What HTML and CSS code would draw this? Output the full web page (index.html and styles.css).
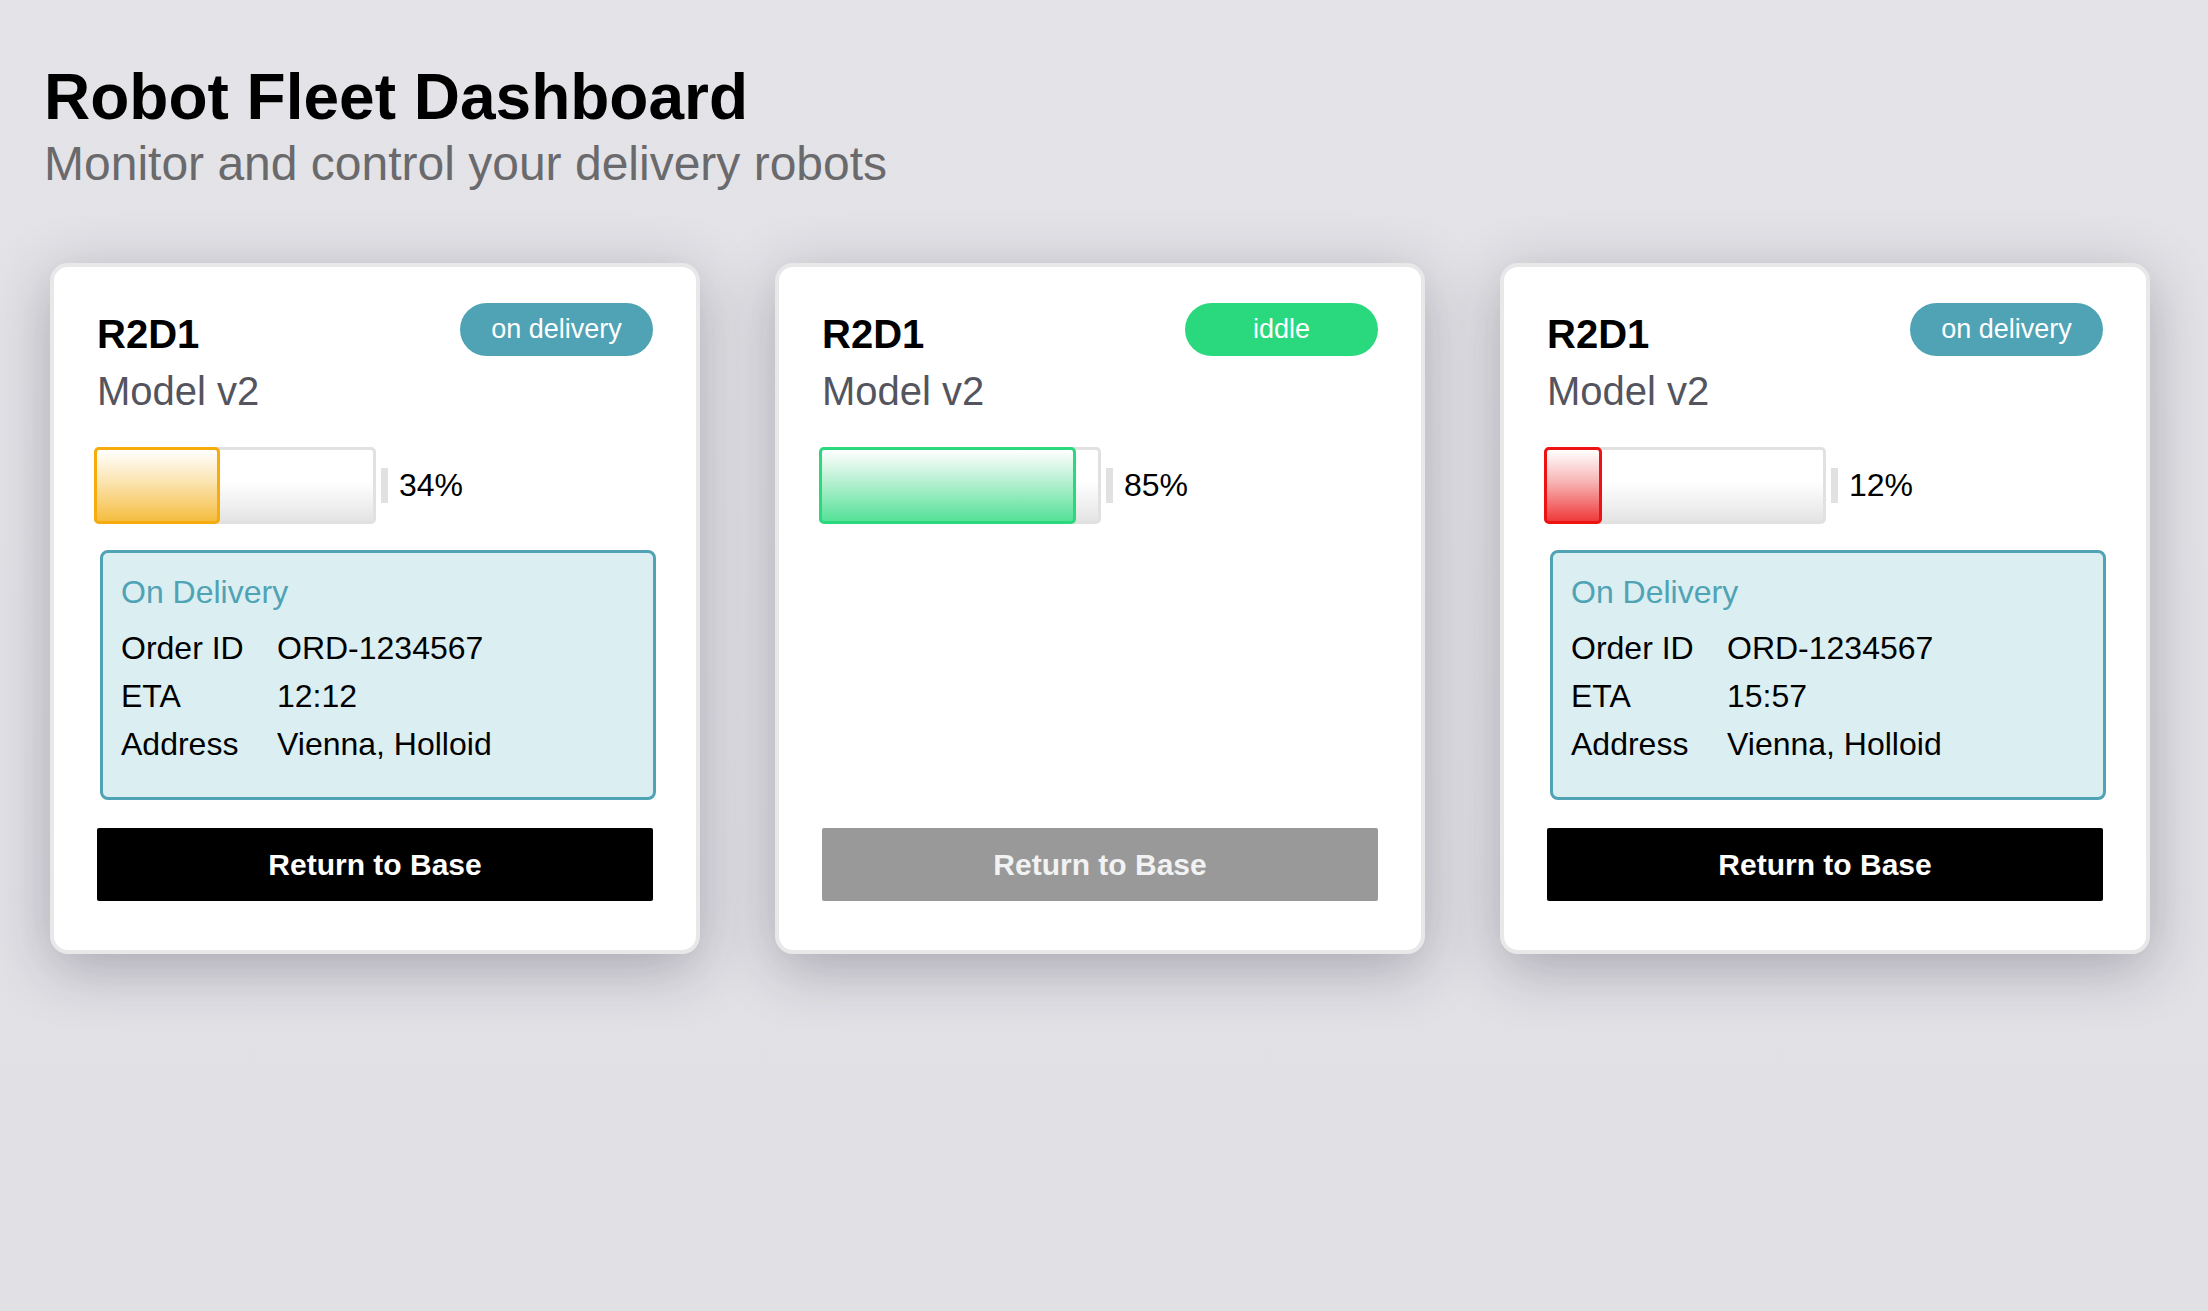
FILE: index.html
```html
<!DOCTYPE html>
<html lang="en">
<head>
<meta charset="utf-8">
<title>Robot Fleet Dashboard</title>
<link rel="stylesheet" href="styles.css">
</head>
<body>
<main class="page">
  <header class="page-head">
    <h1 class="title">Robot Fleet Dashboard</h1>
    <p class="subtitle">Monitor and control your delivery robots</p>
  </header>
  <section class="fleet">
    <article class="card">
      <div class="card-head">
        <div class="ident">
          <h2 class="name">R2D1</h2>
          <div class="model">Model v2</div>
        </div>
        <span class="pill pill-delivery">on delivery</span>
      </div>
      <div class="battery-row">
        <div class="battery"><div class="fill fill-mid" style="width:126px"></div></div>
        <div class="tip"></div>
        <span class="pct">34%</span>
      </div>
      <div class="delivery">
        <h3 class="delivery-title">On Delivery</h3>
        <dl class="info">
          <dt>Order ID</dt><dd>ORD-1234567</dd>
          <dt>ETA</dt><dd>12:12</dd>
          <dt>Address</dt><dd>Vienna, Holloid</dd>
        </dl>
      </div>
      <button class="btn">Return to Base</button>
    </article>

    <article class="card">
      <div class="card-head">
        <div class="ident">
          <h2 class="name">R2D1</h2>
          <div class="model">Model v2</div>
        </div>
        <span class="pill pill-idle">iddle</span>
      </div>
      <div class="battery-row">
        <div class="battery"><div class="fill fill-high" style="width:257px"></div></div>
        <div class="tip"></div>
        <span class="pct">85%</span>
      </div>
      <button class="btn btn-disabled">Return to Base</button>
    </article>

    <article class="card">
      <div class="card-head">
        <div class="ident">
          <h2 class="name">R2D1</h2>
          <div class="model">Model v2</div>
        </div>
        <span class="pill pill-delivery">on delivery</span>
      </div>
      <div class="battery-row">
        <div class="battery"><div class="fill fill-low" style="width:58px"></div></div>
        <div class="tip"></div>
        <span class="pct">12%</span>
      </div>
      <div class="delivery">
        <h3 class="delivery-title">On Delivery</h3>
        <dl class="info">
          <dt>Order ID</dt><dd>ORD-1234567</dd>
          <dt>ETA</dt><dd>15:57</dd>
          <dt>Address</dt><dd>Vienna, Holloid</dd>
        </dl>
      </div>
      <button class="btn">Return to Base</button>
    </article>
  </section>
</main>
</body>
</html>
```
FILE: styles.css
```css
html, body {
  margin: 0;
  padding: 0;
}

body {
  min-height: 1311px;
  background: linear-gradient(to bottom, #e4e4e8 0%, #e1e0e5 100%);
  font-family: "Liberation Sans", Arial, sans-serif;
  color: #000;
}

.page {
  padding: 60px 44px 0;
}

.title {
  margin: 0;
  font-size: 64px;
  line-height: 74px;
  font-weight: 700;
  color: #000;
}

.subtitle {
  margin: 2px 0 0;
  font-size: 48px;
  line-height: 55px;
  color: #6a6a6c;
}

.fleet {
  margin-top: 72px;
  padding-left: 6px;
  display: grid;
  grid-template-columns: repeat(3, 650px);
  column-gap: 75px;
}

.card {
  box-sizing: border-box;
  background: #fff;
  border: 4px solid #e8e8e9;
  border-radius: 18px;
  padding: 36px 43px 49px;
  display: flex;
  flex-direction: column;
  box-shadow: 0 14px 60px rgba(30, 30, 50, 0.3);
}

.card-head {
  display: flex;
  justify-content: space-between;
  align-items: flex-start;
}

.name {
  margin: 8px 0 0;
  font-size: 40px;
  line-height: 46px;
  font-weight: 700;
  color: #000;
}

.model {
  margin-top: 11px;
  font-size: 40px;
  line-height: 46px;
  color: #54545e;
}

.pill {
  width: 193px;
  height: 53px;
  border-radius: 27px;
  display: flex;
  align-items: center;
  justify-content: center;
  font-size: 27px;
  color: #fff;
}

.pill-delivery {
  background: #50a3b5;
}

.pill-idle {
  background: #2ad97e;
}

.battery-row {
  margin: 33px 0 0 -3px;
  display: flex;
  align-items: center;
}

.battery {
  box-sizing: border-box;
  width: 282px;
  height: 77px;
  border: 3px solid #e1e1e1;
  border-radius: 5px;
  background: linear-gradient(to bottom, #ffffff 0%, #ffffff 45%, #e4e4e4 100%);
  display: flex;
}

.fill {
  box-sizing: border-box;
  flex: none;
  margin: -3px 0 -3px -3px;
  border: 3px solid;
  border-radius: 5px;
}

.fill-mid {
  border-color: #f5ac0c;
  background: linear-gradient(to bottom, #ffffff 0%, #fbe4b0 45%, #f5bd40 100%);
}

.fill-high {
  border-color: #2ad97e;
  background: linear-gradient(to bottom, #ffffff 0%, #b5f0d0 45%, #55e198 100%);
}

.fill-low {
  border-color: #ee1212;
  background: linear-gradient(to bottom, #ffffff 0%, #f8b4b4 45%, #ef3a3a 100%);
}

.tip {
  width: 7px;
  height: 35px;
  margin-left: 5px;
  background: #e1e1e1;
}

.pct {
  margin-left: 11px;
  font-size: 32px;
  line-height: 37px;
  color: #000;
}

.delivery {
  margin: 26px -3px 28px 3px;
  border: 3px solid #50a3b5;
  border-radius: 8px;
  background: #dbeef2;
  padding: 21px 18px 29px;
}

.delivery-title {
  margin: 0 0 13px;
  font-size: 32px;
  line-height: 37px;
  font-weight: 400;
  color: #50a3b5;
}

.info {
  margin: 0;
  display: grid;
  grid-template-columns: 156px 1fr;
  font-size: 32px;
  line-height: 48px;
  color: #000;
}

.info dt,
.info dd {
  margin: 0;
}

.btn {
  margin-top: auto;
  width: 100%;
  height: 73px;
  border: 0;
  border-radius: 2px;
  background: #000;
  color: #fff;
  font-family: "Liberation Sans", Arial, sans-serif;
  font-size: 30px;
  font-weight: 700;
  padding: 0;
}

.btn-disabled {
  background: #999999;
  color: #f2f2f2;
}
```
